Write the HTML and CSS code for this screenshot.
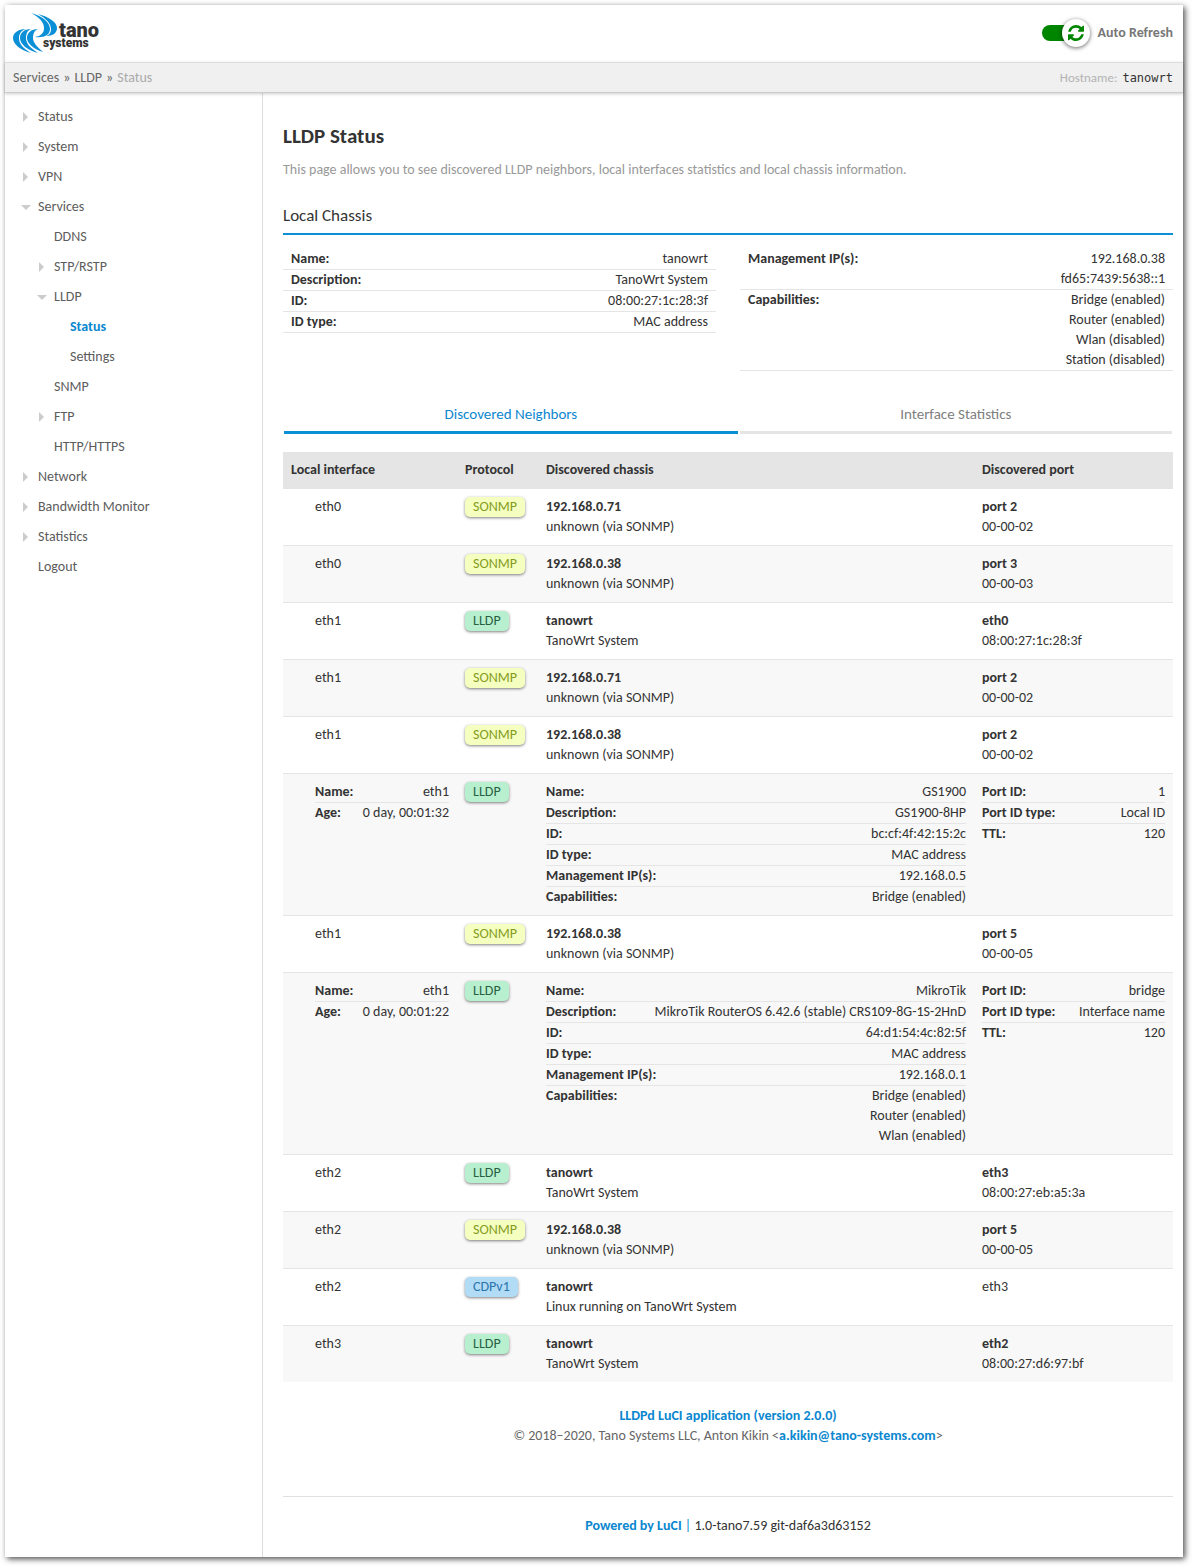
FILE: index.html
```html
<!DOCTYPE html>
<html lang="en">
<head>
<meta charset="utf-8">
<meta name="viewport" content="width=device-width, initial-scale=1">
<title>tanowrt - LLDP Status</title>
<link rel="stylesheet" href="styles.css">
</head>
<body>
<div class="shell">
  <header class="topbar">
    <a class="logo" href="#" aria-label="Tano Systems">
      <svg width="90" height="40" viewBox="0 0 90 40">
        <g class="logo-wave">
          <path d="M13 16C5 16 0 20 0 25C0 31 7 37 18 40C10 35 6 31 6 25C6 20 9 17 13 16Z"/>
          <path d="M18 16C11 16 7 20 7 25C7 31 14 37 25 40C16 34 13 30 13 25C13 20 15 17 18 16Z"/>
          <path d="M25 16C18 16 14 20 14 25C14 30 20 36 30 39C23 33 20 29 20 25C20 20 22 17 25 16Z"/>
          <path d="M18 0C26 4 31 9 31 15C31 20 28 23 22 24C31 25 37 22 37 16C37 9 29 3 18 0Z"/>
          <path d="M25 1C34 6 38 11 38 16C38 20 36 22 33 23C40 23 44 20 44 15C44 9 36 4 25 1Z"/>
        </g>
        <text class="logo-name" x="46" y="24">tano</text>
        <text class="logo-sub" x="30" y="34">systems</text>
      </svg>
    </a>
    <label class="refresh">
      <span class="switch">
        <input class="switch-track" type="checkbox" checked>
        <span class="switch-knob">
          <svg width="16" height="16" viewBox="0 0 1536 1536"><path fill="#008500" d="M1511 928q0 5-1 7-64 268-268 434.500t-478 166.500q-146 0-282.500-55t-243.500-157l-129 129q-19 19-45 19t-45-19-19-45v-448q0-26 19-45t45-19h448q26 0 45 19t19 45-19 45l-137 137q71 66 161 102t187 36q134 0 250-65t186-179q11-17 53-117 8-23 30-23h192q13 0 22.500 9.500t9.500 22.500zm25-800v448q0 26-19 45t-45 19h-448q-26 0-45-19t-19-45 19-45l138-138q-148-137-349-137-134 0-250 65t-186 179q-11 17-53 117-8 23-30 23h-199q-13 0-22.500-9.500t-9.500-22.500v-7q65-268 270-434.500t480-166.500q146 0 284 55.500t245 156.500l130-129q19-19 45-19t45 19 19 45z"/></svg>
        </span>
      </span>
      <span>Auto Refresh</span>
    </label>
  </header>

  <div class="crumbbar">
    <nav class="crumbs" aria-label="Breadcrumb"><a href="#">Services</a><span>»</span><a href="#">LLDP</a><span>»</span><span class="crumb-current">Status</span></nav>
    <div class="host"><span>Hostname:</span><span class="host-name">tanowrt</span></div>
  </div>

  <div class="body">
    <nav class="sidebar" aria-label="Main menu">
      <ul class="menu">
        <li><a class="closed" href="#">Status</a></li>
        <li><a class="closed" href="#">System</a></li>
        <li><a class="closed" href="#">VPN</a></li>
        <li><a class="open" href="#">Services</a>
          <ul>
            <li><a href="#">DDNS</a></li>
            <li><a class="closed" href="#">STP/RSTP</a></li>
            <li><a class="open" href="#">LLDP</a>
              <ul>
                <li><a class="active" href="#">Status</a></li>
                <li><a href="#">Settings</a></li>
              </ul>
            </li>
            <li><a href="#">SNMP</a></li>
            <li><a class="closed" href="#">FTP</a></li>
            <li><a href="#">HTTP/HTTPS</a></li>
          </ul>
        </li>
        <li><a class="closed" href="#">Network</a></li>
        <li><a class="closed" href="#">Bandwidth Monitor</a></li>
        <li><a class="closed" href="#">Statistics</a></li>
        <li><a href="#">Logout</a></li>
      </ul>
    </nav>

    <main class="content">
      <h1>LLDP Status</h1>
      <p class="intro">This page allows you to see discovered LLDP neighbors, local interfaces statistics and local chassis information.</p>

      <h2>Local Chassis</h2>
      <div class="chassis">
        <dl class="facts">
          <div><dt>Name:</dt><dd>tanowrt</dd></div>
          <div><dt>Description:</dt><dd>TanoWrt System</dd></div>
          <div><dt>ID:</dt><dd>08:00:27:1c:28:3f</dd></div>
          <div><dt>ID type:</dt><dd>MAC address</dd></div>
        </dl>
        <dl class="facts">
          <div><dt>Management IP(s):</dt><dd>192.168.0.38<br>fd65:7439:5638::1</dd></div>
          <div><dt>Capabilities:</dt><dd>Bridge (enabled)<br>Router (enabled)<br>Wlan (disabled)<br>Station (disabled)</dd></div>
        </dl>
      </div>

      <nav class="tabs" aria-label="LLDP views">
        <a class="tab tab-active" href="#">Discovered Neighbors</a>
        <a class="tab" href="#">Interface Statistics</a>
      </nav>

      <table class="neighbors">
        <colgroup><col class="col-local"><col class="col-proto"><col><col class="col-port"></colgroup>
        <thead>
          <tr><th>Local interface</th><th>Protocol</th><th>Discovered chassis</th><th>Discovered port</th></tr>
        </thead>
        <tbody>
          <tr><td>eth0</td><td><span class="badge sonmp">SONMP</span></td><td><b>192.168.0.71</b><br>unknown (via SONMP)</td><td><b>port 2</b><br>00-00-02</td></tr>
          <tr><td>eth0</td><td><span class="badge sonmp">SONMP</span></td><td><b>192.168.0.38</b><br>unknown (via SONMP)</td><td><b>port 3</b><br>00-00-03</td></tr>
          <tr><td>eth1</td><td><span class="badge lldp">LLDP</span></td><td><b>tanowrt</b><br>TanoWrt System</td><td><b>eth0</b><br>08:00:27:1c:28:3f</td></tr>
          <tr><td>eth1</td><td><span class="badge sonmp">SONMP</span></td><td><b>192.168.0.71</b><br>unknown (via SONMP)</td><td><b>port 2</b><br>00-00-02</td></tr>
          <tr><td>eth1</td><td><span class="badge sonmp">SONMP</span></td><td><b>192.168.0.38</b><br>unknown (via SONMP)</td><td><b>port 2</b><br>00-00-02</td></tr>
          <tr>
            <td><dl class="details"><div><dt>Name:</dt><dd>eth1</dd></div><div><dt>Age:</dt><dd>0 day, 00:01:32</dd></div></dl></td>
            <td><span class="badge lldp">LLDP</span></td>
            <td><dl class="details">
              <div><dt>Name:</dt><dd>GS1900</dd></div>
              <div><dt>Description:</dt><dd>GS1900-8HP</dd></div>
              <div><dt>ID:</dt><dd>bc:cf:4f:42:15:2c</dd></div>
              <div><dt>ID type:</dt><dd>MAC address</dd></div>
              <div><dt>Management IP(s):</dt><dd>192.168.0.5</dd></div>
              <div><dt>Capabilities:</dt><dd>Bridge (enabled)</dd></div>
            </dl></td>
            <td><dl class="details">
              <div><dt>Port ID:</dt><dd>1</dd></div>
              <div><dt>Port ID type:</dt><dd>Local ID</dd></div>
              <div><dt>TTL:</dt><dd>120</dd></div>
            </dl></td>
          </tr>
          <tr><td>eth1</td><td><span class="badge sonmp">SONMP</span></td><td><b>192.168.0.38</b><br>unknown (via SONMP)</td><td><b>port 5</b><br>00-00-05</td></tr>
          <tr>
            <td><dl class="details"><div><dt>Name:</dt><dd>eth1</dd></div><div><dt>Age:</dt><dd>0 day, 00:01:22</dd></div></dl></td>
            <td><span class="badge lldp">LLDP</span></td>
            <td><dl class="details">
              <div><dt>Name:</dt><dd>MikroTik</dd></div>
              <div><dt>Description:</dt><dd>MikroTik RouterOS 6.42.6 (stable) CRS109-8G-1S-2HnD</dd></div>
              <div><dt>ID:</dt><dd>64:d1:54:4c:82:5f</dd></div>
              <div><dt>ID type:</dt><dd>MAC address</dd></div>
              <div><dt>Management IP(s):</dt><dd>192.168.0.1</dd></div>
              <div><dt>Capabilities:</dt><dd>Bridge (enabled)<br>Router (enabled)<br>Wlan (enabled)</dd></div>
            </dl></td>
            <td><dl class="details">
              <div><dt>Port ID:</dt><dd>bridge</dd></div>
              <div><dt>Port ID type:</dt><dd>Interface name</dd></div>
              <div><dt>TTL:</dt><dd>120</dd></div>
            </dl></td>
          </tr>
          <tr><td>eth2</td><td><span class="badge lldp">LLDP</span></td><td><b>tanowrt</b><br>TanoWrt System</td><td><b>eth3</b><br>08:00:27:eb:a5:3a</td></tr>
          <tr><td>eth2</td><td><span class="badge sonmp">SONMP</span></td><td><b>192.168.0.38</b><br>unknown (via SONMP)</td><td><b>port 5</b><br>00-00-05</td></tr>
          <tr><td>eth2</td><td><span class="badge cdp">CDPv1</span></td><td><b>tanowrt</b><br>Linux running on TanoWrt System</td><td>eth3</td></tr>
          <tr><td>eth3</td><td><span class="badge lldp">LLDP</span></td><td><b>tanowrt</b><br>TanoWrt System</td><td><b>eth2</b><br>08:00:27:d6:97:bf</td></tr>
        </tbody>
      </table>

      <p class="credits"><a href="#">LLDPd LuCI application (version 2.0.0)</a><br>© 2018–2020, Tano Systems LLC, Anton Kikin &lt;<a href="#">a.kikin@tano-systems.com</a>&gt;</p>

      <footer class="powered"><a href="#">Powered by LuCI</a> <span class="bar">|</span> 1.0-tano7.59 git-daf6a3d63152</footer>
    </main>
  </div>
</div>
</body>
</html>
```
FILE: styles.css
```css
* {
  box-sizing: border-box;
}

body {
  margin: 0;
  background: #fff;
  color: #333;
  font: 14px/20px Carlito, Lato, sans-serif;
}

h1, h2, p, ul, dl, dd {
  margin: 0;
  padding: 0;
}

ul {
  list-style: none;
}

a {
  color: #0b87cf;
  text-decoration: none;
}

b, dt, th {
  font-weight: 700;
}

.shell {
  margin: 5px 9px 9px 5px;
  background: #fff;
  box-shadow: 2px 2px 6px rgba(0, 0, 0, 0.7);
}

/* Header */

.topbar {
  display: flex;
  align-items: center;
  justify-content: space-between;
  height: 57px;
  padding: 0 10px 1px 8px;
}

.logo svg {
  display: block;
}

.logo-wave {
  fill: #0b8fd6;
}

.logo-name,
.logo-sub {
  fill: #333;
  font-family: Roboto, sans-serif;
  font-weight: 900;
}

.logo-name {
  font-size: 20px;
}

.logo-sub {
  font-size: 12px;
}

.refresh {
  display: flex;
  align-items: center;
  gap: 8px;
  color: #777;
  font-weight: 700;
}

.switch {
  position: relative;
  display: flex;
  align-items: center;
  width: 48px;
  height: 28px;
}

.switch-track {
  appearance: none;
  width: 44px;
  height: 16px;
  margin: 0;
  border-radius: 8px;
  background: #ccc;
}

.switch-track:checked {
  background: #008500;
}

.switch-knob {
  position: absolute;
  top: 0;
  right: 0;
  display: flex;
  align-items: center;
  justify-content: center;
  width: 28px;
  height: 28px;
  border-radius: 50%;
  background: #fff;
  box-shadow: 0 1px 4px rgba(0, 0, 0, 0.6);
}

.crumbbar {
  position: relative;
  display: flex;
  align-items: center;
  justify-content: space-between;
  height: 31px;
  padding: 0 10px 0 8px;
  border-top: 1px solid #ddd;
  border-bottom: 1px solid #ccc;
  background: #f0f0f0;
  box-shadow: 0 1px 3px rgba(0, 0, 0, 0.2);
}

.crumbs {
  display: flex;
  gap: 4px;
  color: #666;
}

.crumbs a {
  color: #666;
}

.crumbs .crumb-current {
  color: #aaa;
}

.host {
  display: flex;
  gap: 5px;
  color: #b3b3b3;
  font-size: 13px;
}

.host-name {
  color: #333;
  font-family: "DejaVu Sans Mono", monospace;
  font-size: 12px;
}

/* Sidebar */

.body {
  display: flex;
}

.sidebar {
  flex: none;
  width: 258px;
  padding: 9px 0 20px 15px;
  border-right: 1px solid #ddd;
}

.menu ul {
  padding-left: 16px;
}

.menu a {
  display: flex;
  align-items: center;
  padding-left: 18px;
  color: #5c5c5c;
  line-height: 30px;
}

.menu .closed,
.menu .open {
  padding-left: 0;
}

.menu .closed::before {
  content: "";
  margin: 0 10px 0 3px;
  border: 5px solid transparent;
  border-left-color: #ccc;
  border-right-width: 0;
}

.menu .open::before {
  content: "";
  margin: 0 7px 0 1px;
  border: 5px solid transparent;
  border-top-color: #ccc;
  border-bottom-width: 0;
}

.menu .active {
  color: #0b87cf;
  font-weight: 700;
}

/* Content */

.content {
  flex: 1;
  min-width: 0;
  padding: 31px 10px 21px 20px;
}

h1 {
  font-size: 21px;
  line-height: 24px;
}

.intro {
  margin-top: 12px;
  color: #999;
}

h2 {
  margin-top: 26px;
  padding-bottom: 7px;
  border-bottom: 2px solid #0b8fd6;
  font-size: 17px;
  font-weight: 400;
}

.chassis {
  display: grid;
  grid-template-columns: 1fr 1fr;
  align-items: start;
  gap: 24px;
  margin-top: 14px;
}

.facts > div,
.details > div {
  display: flex;
  justify-content: space-between;
  border-bottom: 1px solid #e5e5e5;
}

.facts > div {
  padding: 0 8px;
}

.details > div:last-child {
  border-bottom: 0;
}

dd {
  text-align: right;
}

.tabs {
  display: flex;
  gap: 2px;
  margin: 33px 1px 18px;
}

.tab {
  flex: 1 1 auto;
  padding-bottom: 7px;
  border-bottom: 3px solid #e5e5e5;
  color: #808080;
  font-size: 15px;
  text-align: center;
}

.tab-active {
  border-color: #0b8fd6;
  color: #0b87cf;
}

.neighbors {
  width: 100%;
  border-collapse: separate;
  border-spacing: 0;
  table-layout: fixed;
}

.col-local {
  width: 174px;
}

.col-proto {
  width: 81px;
}

.col-port {
  width: 199px;
}

.neighbors th {
  height: 37px;
  padding: 0 8px 2px;
  background: #e5e5e5;
  text-align: left;
}

.neighbors td {
  padding: 8px;
  border-bottom: 1px solid #e5e5e5;
  vertical-align: top;
}

.neighbors td:first-child {
  padding-left: 32px;
}

.neighbors tbody tr:nth-child(even) {
  background: #f8f8f8;
}

.neighbors tr:last-child td {
  border-bottom: 0;
}

.badge {
  display: block;
  width: fit-content;
  padding: 0 8px;
  border-radius: 5px;
  box-shadow: 0 1px 3px rgba(0, 0, 0, 0.5);
}

.sonmp {
  background: #f4ffc0;
  color: #859a1c;
}

.lldp {
  background: #b8f0cf;
  color: #2a6043;
}

.cdp {
  background: #b2dbf5;
  color: #2a75ad;
}

.credits {
  margin-top: 24px;
  color: #666;
  text-align: center;
}

.credits a,
.powered a {
  font-weight: 700;
}

.powered {
  margin-top: 50px;
  padding-top: 19px;
  border-top: 1px solid #e0e0e0;
  text-align: center;
}

.bar {
  color: #0b87cf;
}
```
